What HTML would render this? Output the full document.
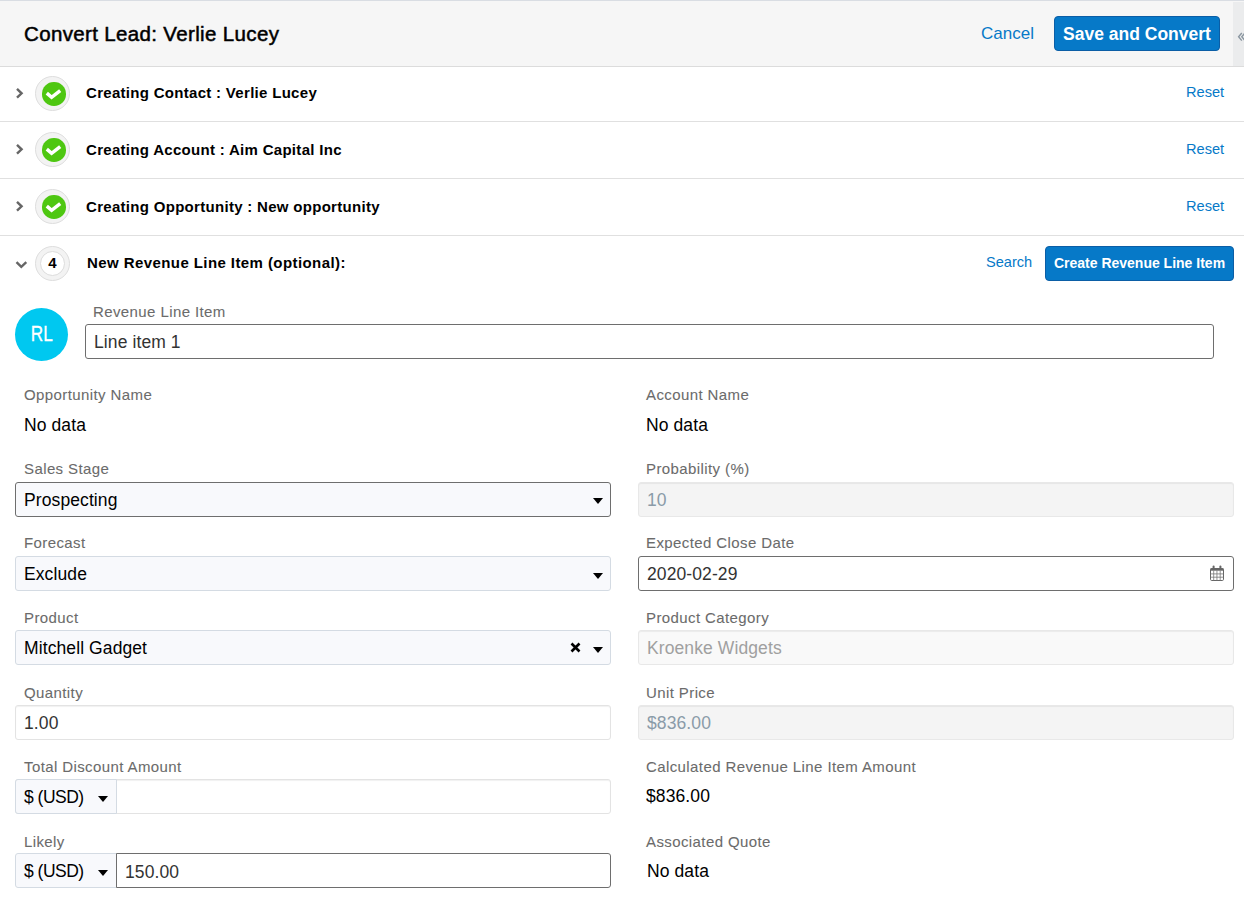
<!DOCTYPE html>
<html><head><meta charset="utf-8">
<style>
*{box-sizing:border-box;margin:0;padding:0}
html,body{width:1244px;height:900px;overflow:hidden;background:#fff;font-family:"Liberation Sans",sans-serif;color:#000}
.a{position:absolute;white-space:nowrap}
#hdr{position:absolute;left:0;top:0;width:1244px;height:67px;background:#f6f6f6;border-top:1px solid #d9dde3;border-bottom:1px solid #dcdcdc}
#strip{position:absolute;left:1233px;top:1px;width:11px;height:64px;background:#ebeced}
.title{font-size:20.5px;letter-spacing:0.35px;left:24px;top:21px;color:#000;-webkit-text-stroke:0.5px #000}
.link{color:#0679c8}
.btn{position:absolute;background:#0679c8;border:1px solid #0b5ea6;border-radius:4px;color:#fff;font-weight:bold;text-align:center;white-space:nowrap}
.row{position:absolute;left:0;width:1244px;border-bottom:1px solid #e0e0e0}
.circ{position:absolute;left:35px;width:35px;height:35px;border-radius:50%;background:#f3f3f3;border:1px solid #dedede}
.green{position:absolute;left:6px;top:5.5px;width:23.5px;height:23.5px;border-radius:50%;background:#4ec711}
.rtitle{font-size:15px;font-weight:bold;letter-spacing:0.3px;left:86px}
.reset{font-size:14.6px;left:1186px;color:#0679c8}
.lbl{position:absolute;font-size:15px;letter-spacing:0.4px;color:#6b6b6b;white-space:nowrap;-webkit-text-stroke:0.08px #6b6b6b}
.val{position:absolute;font-size:17.5px;letter-spacing:0.1px;color:#000;white-space:nowrap}
.inp{position:absolute;height:35px;border-radius:3px;white-space:nowrap;font-size:17.5px;letter-spacing:0.1px;padding-left:8px;padding-top:1px;line-height:33px}
.sel{background:#f8f9fc;border:1px solid #d4dbe3;color:#000}
.dark{border:1px solid #6e6e6e}
.ro{background:#f4f4f4;border:1px solid #e8e8e8;color:#8a9ba8;box-shadow:inset 0 1px 1px rgba(0,0,0,.06)}
.txt{background:#fff;border:1px solid #e3e3e3;color:#333;box-shadow:inset 0 1px 1px rgba(0,0,0,.06)}
.tri{position:absolute;width:0;height:0;border-left:5.5px solid transparent;border-right:5.5px solid transparent;border-top:6px solid #000}
</style></head><body>

<div id="hdr">
  <div class="a title">Convert Lead: Verlie Lucey</div>
  <div class="a link" style="left:981px;top:23px;font-size:17px">Cancel</div>
  <div class="btn" style="left:1054px;top:15px;width:166px;height:35px;font-size:17.5px;line-height:35px">Save and Convert</div>
  <div id="strip"><svg width="11" height="65" style="position:absolute;left:0;top:0"><path d="M8.8 31 L5.6 34.8 L8.8 38.6 M12 31 L8.8 34.8 L12 38.6" stroke="#8a96a0" stroke-width="1.4" fill="none"/></svg></div>
</div>

<!-- row 1 -->
<div class="row" style="top:67px;height:55px">
  <svg class="a" style="left:12px;top:18px" width="16" height="20"><path d="M5 3.9 L9.6 8.3 L5 12.7" stroke="#666" stroke-width="2.4" fill="none"/></svg>
  <div class="circ" style="top:8.5px"><div class="green"></div>
    <svg class="a" style="left:0;top:0" width="35" height="35"><path d="M10.8 16.2 L15.6 20.3 L24.2 13.6" stroke="#fff" stroke-width="3.5" fill="none"/></svg></div>
  <div class="a rtitle" style="top:17px">Creating Contact : Verlie Lucey</div>
  <div class="a reset" style="top:17px">Reset</div>
</div>
<!-- row 2 -->
<div class="row" style="top:122px;height:57px">
  <svg class="a" style="left:12px;top:19px" width="16" height="20"><path d="M5 3.9 L9.6 8.3 L5 12.7" stroke="#666" stroke-width="2.4" fill="none"/></svg>
  <div class="circ" style="top:9.5px"><div class="green"></div>
    <svg class="a" style="left:0;top:0" width="35" height="35"><path d="M10.8 16.2 L15.6 20.3 L24.2 13.6" stroke="#fff" stroke-width="3.5" fill="none"/></svg></div>
  <div class="a rtitle" style="top:19px">Creating Account : Aim Capital Inc</div>
  <div class="a reset" style="top:19px">Reset</div>
</div>
<!-- row 3 -->
<div class="row" style="top:179px;height:57px">
  <svg class="a" style="left:12px;top:19px" width="16" height="20"><path d="M5 3.9 L9.6 8.3 L5 12.7" stroke="#666" stroke-width="2.4" fill="none"/></svg>
  <div class="circ" style="top:9.5px"><div class="green"></div>
    <svg class="a" style="left:0;top:0" width="35" height="35"><path d="M10.8 16.2 L15.6 20.3 L24.2 13.6" stroke="#fff" stroke-width="3.5" fill="none"/></svg></div>
  <div class="a rtitle" style="top:19px">Creating Opportunity : New opportunity</div>
  <div class="a reset" style="top:19px">Reset</div>
</div>

<!-- row 4 header -->
<svg class="a" style="left:12px;top:255px" width="20" height="16"><path d="M4.5 7.2 L9.3 11.8 L14.3 7.2" stroke="#666" stroke-width="2.4" fill="none"/></svg>
<div class="circ" style="top:246px"><div style="position:absolute;left:4px;top:4px;width:25px;height:25px;border-radius:50%;background:#fff;border:1px solid #dcdcdc"></div>
  <div class="a" style="left:0;width:33px;text-align:center;top:7px;font-size:15px;font-weight:bold">4</div></div>
<div class="a rtitle" style="top:254px;left:87px;letter-spacing:0.42px">New Revenue Line Item (optional):</div>
<div class="a link" style="left:986px;top:254px;font-size:14.6px">Search</div>
<div class="btn" style="left:1045px;top:246px;width:189px;height:35px;font-size:14px;line-height:33px">Create Revenue Line Item</div>

<!-- avatar + name -->
<div class="a" style="left:15px;top:307.5px;width:53px;height:53px;border-radius:50%;background:#00c8f0;color:#fff;font-size:21.5px;text-align:center;line-height:53px"><span style="display:inline-block;transform:scaleX(0.8);-webkit-text-stroke:0.3px #fff">RL</span></div>
<div class="lbl" style="left:93px;top:303px">Revenue Line Item</div>
<div class="inp dark" style="left:85px;top:324px;width:1129px;background:#fff;color:#333">Line item 1</div>

<!-- grid -->
<div class="lbl" style="left:24px;top:386px">Opportunity Name</div>
<div class="val" style="left:24px;top:415px">No data</div>
<div class="lbl" style="left:646px;top:386px">Account Name</div>
<div class="val" style="left:646px;top:415px">No data</div>

<div class="lbl" style="left:24px;top:460px">Sales Stage</div>
<div class="inp sel dark" style="left:15px;top:481.5px;width:596px">Prospecting<div class="tri" style="left:577px;top:15px"></div></div>
<div class="lbl" style="left:646px;top:460px">Probability (%)</div>
<div class="inp ro" style="left:638px;top:481.5px;width:596px">10</div>

<div class="lbl" style="left:24px;top:534px">Forecast</div>
<div class="inp sel" style="left:15px;top:556px;width:596px">Exclude<div class="tri" style="left:577px;top:16px"></div></div>
<div class="lbl" style="left:646px;top:534px">Expected Close Date</div>
<div class="inp dark" style="left:638px;top:556px;width:596px;background:#fff;color:#333">2020-02-29
  <svg class="a" style="left:571px;top:8px" width="15" height="17"><rect x="0.5" y="3.5" width="13" height="12" rx="1.2" fill="none" stroke="#666" stroke-width="1"/><rect x="0.5" y="3.3" width="13" height="2.4" fill="#666"/><path d="M0.5 8.9H13.5M0.5 12.2H13.5M3.7 5.5V15.5M6.95 5.5V15.5M10.2 5.5V15.5" stroke="#777" stroke-width="0.8"/><rect x="2.6" y="0.4" width="2" height="4.4" rx="1" fill="#666"/><rect x="9.4" y="0.4" width="2" height="4.4" rx="1" fill="#666"/></svg></div>

<div class="lbl" style="left:24px;top:609px">Product</div>
<div class="inp sel" style="left:15px;top:630px;width:596px">Mitchell Gadget
  <svg class="a" style="left:554px;top:11px" width="12" height="12"><path d="M1.5 1.5L9.5 9.5M9.5 1.5L1.5 9.5" stroke="#000" stroke-width="2.6"/></svg>
  <div class="tri" style="left:577px;top:16px"></div></div>
<div class="lbl" style="left:646px;top:609px">Product Category</div>
<div class="inp ro" style="left:638px;top:630px;width:596px;background:#f9f9f9;color:#a0a0a0">Kroenke Widgets</div>

<div class="lbl" style="left:24px;top:684px">Quantity</div>
<div class="inp txt" style="left:15px;top:705px;width:596px">1.00</div>
<div class="lbl" style="left:646px;top:684px">Unit Price</div>
<div class="inp ro" style="left:638px;top:705px;width:596px">$836.00</div>

<div class="lbl" style="left:24px;top:758px">Total Discount Amount</div>
<div class="inp txt" style="left:15px;top:779px;width:596px"></div>
<div class="inp sel" style="left:15px;top:779px;width:102px;border-radius:3px 0 0 3px;letter-spacing:-0.5px">$ (USD)<div class="tri" style="left:82px;top:16px"></div></div>
<div class="lbl" style="left:646px;top:758px">Calculated Revenue Line Item Amount</div>
<div class="val" style="left:646px;top:786px">$836.00</div>

<div class="lbl" style="left:24px;top:833px">Likely</div>
<div class="inp sel" style="left:15px;top:853px;width:102px;border-radius:3px 0 0 3px;letter-spacing:-0.5px">$ (USD)<div class="tri" style="left:82px;top:16px"></div></div>
<div class="inp dark" style="left:116px;top:853px;width:495px;background:#fff;color:#333;border-radius:0 3px 3px 0;padding-top:2px">150.00</div>
<div class="lbl" style="left:646px;top:833px">Associated Quote</div>
<div class="val" style="left:647px;top:861px">No data</div>

</body></html>
